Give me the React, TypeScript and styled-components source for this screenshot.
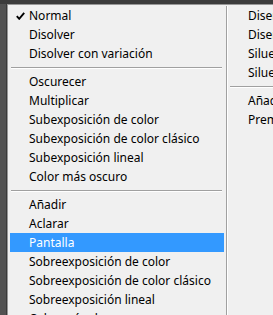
import styled, { createGlobalStyle } from "styled-components";

const GlobalStyle = createGlobalStyle`
  html, body {
    margin: 0;
    padding: 0;
    width: 273px;
    height: 315px;
    overflow: hidden;
    background: #3c3c3c;
  }
`;

const Backdrop = styled.div`
  display: flex;
  padding-top: 4px;
  height: 311px;
  overflow: hidden;
`;

const Strip = styled.div`
  width: 7px;
  flex-shrink: 0;
  background: #525252;
  border-right: 1px solid #3a3a3a;
  box-sizing: border-box;
`;

const Menu = styled.div`
  display: flex;
  flex: 1;
  background: #f0f0f0;
  border-top: 1px solid #979797;
  border-left: 1px solid #979797;
  padding: 1px 0 0 2px;
  font-family: "Noto Sans", "Open Sans", sans-serif;
  font-size: 12px;
  color: #000;
  overflow: hidden;
`;

const Column = styled.div<{ width: number }>`
  width: ${(p) => p.width}px;
  flex-shrink: 0;
  display: flex;
  flex-direction: column;
`;

const Divider = styled.div`
  width: 1px;
  background: #a0a0a0;
  margin: 0 1px 0 2px;
  flex-shrink: 0;
  border-right: 1px solid #ffffff;
`;

const Item = styled.div<{ active?: boolean }>`
  position: relative;
  height: 19px;
  line-height: 19px;
  padding-left: 19px;
  white-space: nowrap;
  background: ${(p) => (p.active ? "#3399ff" : "transparent")};
  color: ${(p) => (p.active ? "#ffffff" : "#000000")};
`;

const Check = styled.svg`
  position: absolute;
  left: 6px;
  top: 6px;
`;

const Separator = styled.div<{ inset: number; right: number }>`
  height: 9px;
  display: flex;
  align-items: center;
  padding: 0 ${(p) => p.right}px 0 ${(p) => p.inset}px;

  &::after {
    content: "";
    flex: 1;
    height: 0;
    border-top: 1px solid #a0a0a0;
    border-bottom: 1px solid #ffffff;
  }
`;

const leftGroups = [
  ["Normal", "Disolver", "Disolver con variación"],
  [
    "Oscurecer",
    "Multiplicar",
    "Subexposición de color",
    "Subexposición de color clásico",
    "Subexposición lineal",
    "Color más oscuro",
  ],
  [
    "Añadir",
    "Aclarar",
    "Pantalla",
    "Sobreexposición de color",
    "Sobreexposición de color clásico",
    "Sobreexposición lineal",
    "Color más claro",
  ],
];

const rightGroups = [
  [
    "Diseño de estarcido alfa",
    "Diseño de estarcido de luminancia",
    "Silueta alfa",
    "Silueta de luminancia",
  ],
  ["Añadir alfa", "Premultiplicación luminiscente"],
];

const App = () => {
  return (
    <>
      <GlobalStyle />
      <Backdrop>
        <Strip />
        <Menu>
          <Column width={214}>
            {leftGroups.map((group, gi) => (
              <div key={gi}>
                {gi > 0 && <Separator inset={1} right={2} />}
                {group.map((label) => (
                  <Item key={label} active={label === "Pantalla"}>
                    {label === "Normal" && (
                      <Check width="9" height="8" viewBox="0 0 9 8">
                        <path
                          d="M0.8 4.2 L3.2 6.8 L8.2 0.8"
                          fill="none"
                          stroke="#000"
                          strokeWidth="1.9"
                        />
                      </Check>
                    )}
                    {label}
                  </Item>
                ))}
              </div>
            ))}
          </Column>
          <Divider />
          <Column width={200}>
            {rightGroups.map((group, gi) => (
              <div key={gi}>
                {gi > 0 && <Separator inset={1} right={0} />}
                {group.map((label) => (
                  <Item key={label}>{label}</Item>
                ))}
              </div>
            ))}
          </Column>
        </Menu>
      </Backdrop>
    </>
  );
};

export default App;
